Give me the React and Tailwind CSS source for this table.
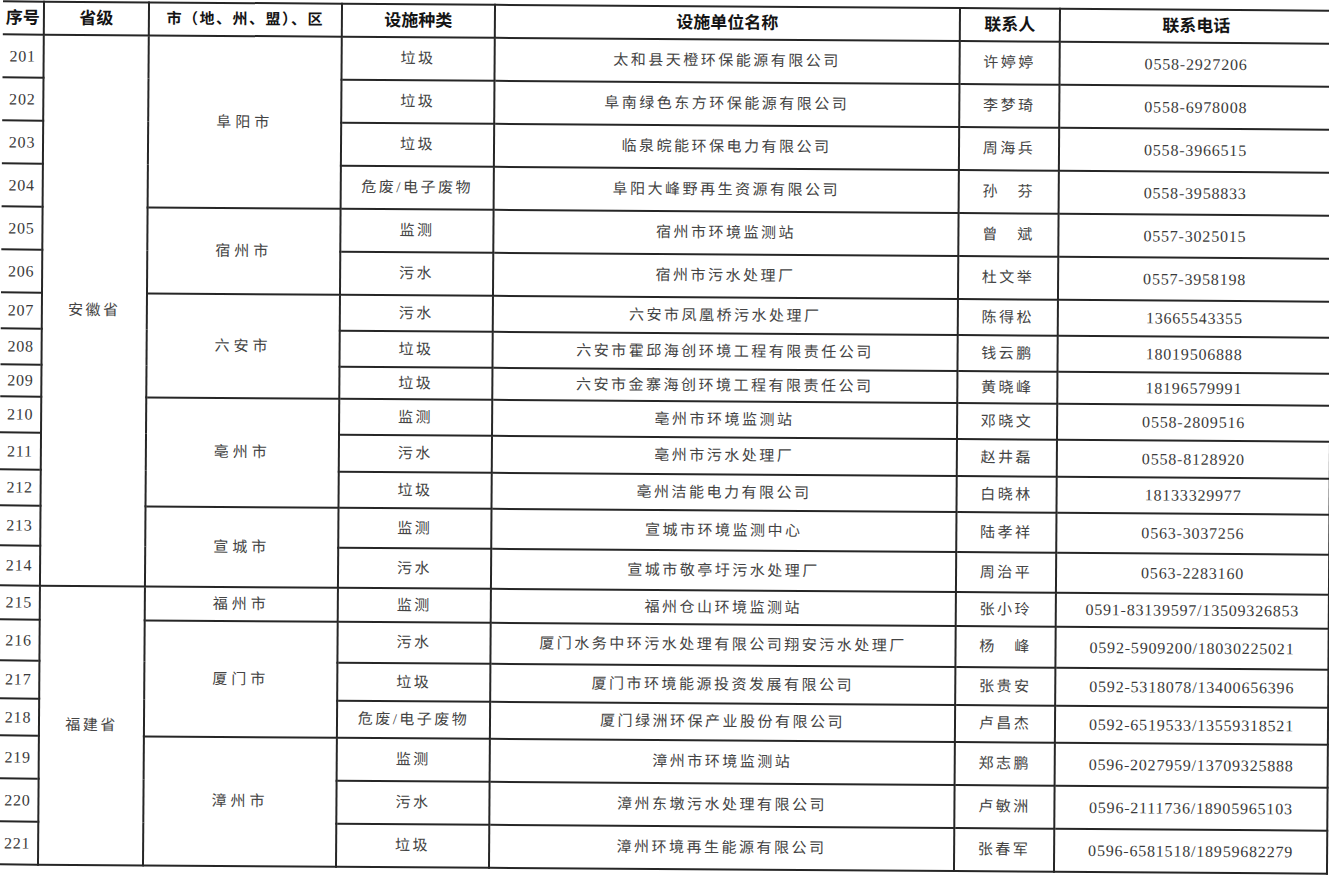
import React from "react";

/* ================= DATA ================= */

const ROWS = [
  { no: 201, prov: "安徽省", provSpan: 14, city: "阜阳市", citySpan: 4, kind: "垃圾", name: "太和县天橙环保能源有限公司", person: "许婷婷", phone: "0558-2927206", h: "h-[43px]" },
  { no: 202, kind: "垃圾", name: "阜南绿色东方环保能源有限公司", person: "李梦琦", phone: "0558-6978008", h: "h-[43px]" },
  { no: 203, kind: "垃圾", name: "临泉皖能环保电力有限公司", person: "周海兵", phone: "0558-3966515", h: "h-[43px]" },
  { no: 204, kind: "危废/电子废物", name: "阜阳大峰野再生资源有限公司", person: "孙　芬", phone: "0558-3958833", h: "h-[43px]" },
  { no: 205, city: "宿州市", citySpan: 2, kind: "监测", name: "宿州市环境监测站", person: "曾　斌", phone: "0557-3025015", h: "h-[43px]" },
  { no: 206, kind: "污水", name: "宿州市污水处理厂", person: "杜文举", phone: "0557-3958198", h: "h-[43px]" },
  { no: 207, city: "六安市", citySpan: 3, kind: "污水", name: "六安市凤凰桥污水处理厂", person: "陈得松", phone: "13665543355", h: "h-[36px]" },
  { no: 208, kind: "垃圾", name: "六安市霍邱海创环境工程有限责任公司", person: "钱云鹏", phone: "18019506888", h: "h-[36px]" },
  { no: 209, kind: "垃圾", name: "六安市金寨海创环境工程有限责任公司", person: "黄晓峰", phone: "18196579991", h: "h-[32px]" },
  { no: 210, city: "亳州市", citySpan: 3, kind: "监测", name: "亳州市环境监测站", person: "邓晓文", phone: "0558-2809516", h: "h-[36px]" },
  { no: 211, kind: "污水", name: "亳州市污水处理厂", person: "赵井磊", phone: "0558-8128920", h: "h-[37px]" },
  { no: 212, kind: "垃圾", name: "亳州洁能电力有限公司", person: "白晓林", phone: "18133329977", h: "h-[36px]" },
  { no: 213, city: "宣城市", citySpan: 2, kind: "监测", name: "宣城市环境监测中心", person: "陆孝祥", phone: "0563-3037256", h: "h-[40px]" },
  { no: 214, kind: "污水", name: "宣城市敬亭圩污水处理厂", person: "周治平", phone: "0563-2283160", h: "h-[40px]" },
  { no: 215, prov: "福建省", provSpan: 7, city: "福州市", citySpan: 1, kind: "监测", name: "福州仓山环境监测站", person: "张小玲", phone: "0591-83139597/13509326853", h: "h-[34px]" },
  { no: 216, city: "厦门市", citySpan: 3, kind: "污水", name: "厦门水务中环污水处理有限公司翔安污水处理厂", person: "杨　峰", phone: "0592-5909200/18030225021", h: "h-[41px]" },
  { no: 217, kind: "垃圾", name: "厦门市环境能源投资发展有限公司", person: "张贵安", phone: "0592-5318078/13400656396", h: "h-[38px]" },
  { no: 218, kind: "危废/电子废物", name: "厦门绿洲环保产业股份有限公司", person: "卢昌杰", phone: "0592-6519533/13559318521", h: "h-[37px]" },
  { no: 219, city: "漳州市", citySpan: 3, kind: "监测", name: "漳州市环境监测站", person: "郑志鹏", phone: "0596-2027959/13709325888", h: "h-[43px]" },
  { no: 220, kind: "污水", name: "漳州东墩污水处理有限公司", person: "卢敏洲", phone: "0596-2111736/18905965103", h: "h-[43px]" },
  { no: 221, kind: "垃圾", name: "漳州环境再生能源有限公司", person: "张春军", phone: "0596-6581518/18959682279", h: "h-[43px]" },
];

const cell = "border-2 border-[#262626] text-center align-middle p-0";
const first = "border-2 border-l-0 border-[#262626] text-center align-middle p-0";
const cn = "text-[15px] tracking-[2.5px] text-[#444]";
const num = "text-[16px] tracking-[0.8px] text-[#3a3a3a]";

/* ================= MAIN ================= */

export default function App() {
  return (
    <div
      className="w-[1329px] h-[875px] overflow-hidden bg-white pt-[5px]"
      style={{ fontFamily: '"Liberation Serif", "Noto Sans CJK SC", serif' }}
    >
      <div className="rotate-[0.4deg] origin-center">
        <table className="border-collapse table-fixed w-[1330px]">
          <colgroup>
            <col className="w-[41px]" />
            <col className="w-[105px]" />
            <col className="w-[193px]" />
            <col className="w-[153px]" />
            <col className="w-[465px]" />
            <col className="w-[100px]" />
            <col className="w-[273px]" />
          </colgroup>

          <thead>
            <tr className="h-[33px] text-[17px] font-bold text-[#141414]">
              <th className={first}>序号</th>
              <th className={cell}>省级</th>
              <th className={`${cell} text-[15px] font-semibold tracking-[1.5px]`}>市（地、州、盟）、区</th>
              <th className={cell}>设施种类</th>
              <th className={cell}>设施单位名称</th>
              <th className={cell}>联系人</th>
              <th className={cell}>联系电话</th>
            </tr>
          </thead>

          <tbody>
            {ROWS.map((r) => (
              <tr key={r.no} className={r.h}>
                <td className={`${first} ${num}`}>{r.no}</td>

                {r.prov && (
                  <td rowSpan={r.provSpan} className={`${cell} ${cn}`}>
                    {r.prov}
                  </td>
                )}

                {r.city && (
                  <td rowSpan={r.citySpan} className={`${cell} ${cn} tracking-[4px]`}>
                    {r.city}
                  </td>
                )}

                <td className={`${cell} ${cn}`}>{r.kind}</td>
                <td className={`${cell} ${cn}`}>{r.name}</td>
                <td className={`${cell} ${cn}`}>{r.person}</td>
                <td className={`${cell} ${num}`}>{r.phone}</td>
              </tr>
            ))}
          </tbody>
        </table>
      </div>
    </div>
  );
}
